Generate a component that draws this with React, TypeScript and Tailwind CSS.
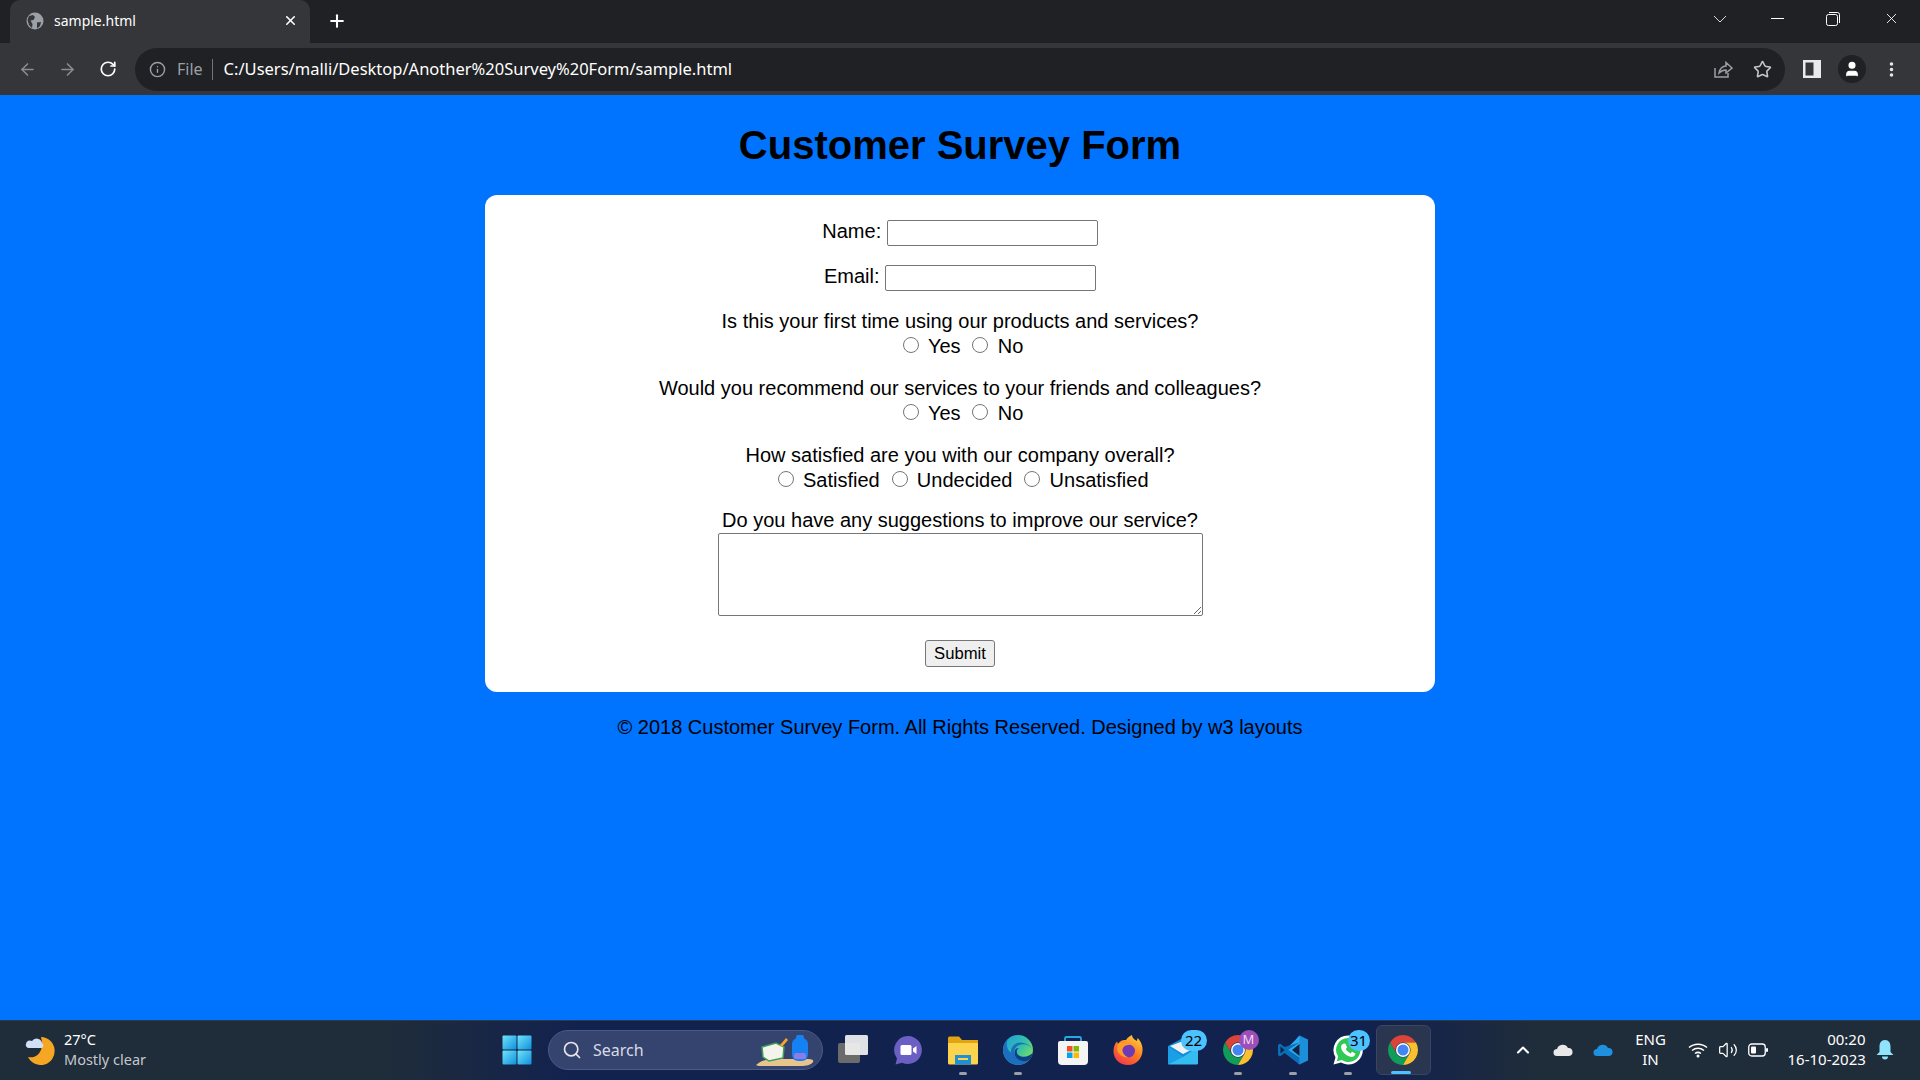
import React from 'react';
import { ArrowLeft, ArrowRight, ChevronUp, Info, MoreVertical, Plus, RotateCw, Search, Star, User, Volume2, X } from 'lucide-react';

const ChromeIcon = () => (
  <svg width="30" height="30" viewBox="0 0 24 24">
    <path d="M12 6H22.39A12 12 0 0 0 1.61 6L6.8 15A6 6 0 0 1 12 6Z" fill="#db4437" />
    <path d="M12 6H22.39A12 12 0 0 0 1.61 6L6.8 15A6 6 0 0 1 12 6Z" fill="#0f9d58" transform="rotate(-120 12 12)" />
    <path d="M12 6H22.39A12 12 0 0 0 1.61 6L6.8 15A6 6 0 0 1 12 6Z" fill="#fbc02d" transform="rotate(120 12 12)" />
    <circle cx="12" cy="12" r="5.6" fill="#fff" />
    <circle cx="12" cy="12" r="4.4" fill="#4285f4" />
  </svg>
);

const WindowsIcon = () => (
  <svg width="30" height="30" viewBox="0 0 30 30">
    <defs>
      <linearGradient id="win" x1="0" y1="0" x2="1" y2="1">
        <stop offset="0" stopColor="#6fe4fb" />
        <stop offset="1" stopColor="#0f8fdc" />
      </linearGradient>
    </defs>
    <rect x="0.5" y="0.5" width="14" height="14" rx="1" fill="url(#win)" />
    <rect x="15.5" y="0.5" width="14" height="14" rx="1" fill="url(#win)" />
    <rect x="0.5" y="15.5" width="14" height="14" rx="1" fill="url(#win)" />
    <rect x="15.5" y="15.5" width="14" height="14" rx="1" fill="url(#win)" />
  </svg>
);

const TaskViewIcon = () => (
  <svg width="30" height="30" viewBox="0 0 30 30">
    <rect x="0" y="8" width="22" height="20" rx="2" fill="#6b6b6b" />
    <rect x="7" y="0" width="23" height="20" rx="1.5" fill="#f2f2f2" fillOpacity="0.92" />
  </svg>
);

const MeetIcon = () => (
  <svg width="30" height="30" viewBox="0 0 30 30">
    <path d="M15 1A14 14 0 1 1 9 27.7L2.5 29.5 4 23.4A14 14 0 0 1 15 1Z" fill="#6b5fc4" />
    <rect x="7.5" y="10" width="11" height="10" rx="1.5" fill="#fff" />
    <path d="M20 13.5 23.5 11v8L20 16.5Z" fill="#fff" />
  </svg>
);

const ExplorerIcon = () => (
  <svg width="30" height="30" viewBox="0 0 30 30">
    <path d="M0 3A1.5 1.5 0 0 1 1.5 1.5H11L14 5H30V10H0Z" fill="#e3a412" />
    <path d="M0 8H30V28A1.5 1.5 0 0 1 28.5 29.5H1.5A1.5 1.5 0 0 1 0 28Z" fill="#fbd34d" />
    <rect x="7" y="20" width="16" height="9.5" fill="#1f8fd6" />
    <rect x="10" y="23" width="10" height="2" fill="#fbd34d" />
  </svg>
);

const EdgeIcon = () => (
  <svg width="30" height="30" viewBox="0 0 30 30">
    <defs>
      <linearGradient id="edge-top" x1="0" y1="0" x2="1" y2="0.7">
        <stop offset="0" stopColor="#1b9de2" />
        <stop offset="0.6" stopColor="#35c1a8" />
        <stop offset="1" stopColor="#7ee05c" />
      </linearGradient>
    </defs>
    <circle cx="15" cy="15" r="15" fill="url(#edge-top)" />
    <path d="M30 17C29 11 23 8.5 18 9.5 12.5 10.5 10 15.5 12 20.5 14 25 20 27 25.5 25.5 22.5 28.5 19 30 15 30 7 30 0 23.5 0 15 0 11 2 7 4.5 5 2.5 11 5 16 8 17.5 7.5 12 12 7.5 17 7.5 23.5 7.5 29 11 30 17Z" fill="#1c6fc0" />
    <path d="M16 13.5C13 14 13 18.5 16 20.5 20 23 27 21.5 30 17.5 29.5 21 27.5 24 25.5 25.5 20 27.5 13.5 25 12 20.5 10.5 15.5 13 12 16 13.5Z" fill="#0c3f86" />
  </svg>
);

const StoreIcon = () => (
  <svg width="30" height="30" viewBox="0 0 30 30">
    <path d="M7 7V3.5A1.5 1.5 0 0 1 8.5 2H21.5A1.5 1.5 0 0 1 23 3.5V7" fill="none" stroke="#27a9e6" strokeWidth="1.8" />
    <path d="M0 8A2 2 0 0 1 2 6H28A2 2 0 0 1 30 8V26A4 4 0 0 1 26 30H4A4 4 0 0 1 0 26Z" fill="#f4f4f4" />
    <rect x="9" y="11" width="5.5" height="5.5" fill="#f25022" />
    <rect x="15.5" y="11" width="5.5" height="5.5" fill="#7fba00" />
    <rect x="9" y="17.5" width="5.5" height="5.5" fill="#00a4ef" />
    <rect x="15.5" y="17.5" width="5.5" height="5.5" fill="#ffb900" />
  </svg>
);

const FirefoxIcon = () => (
  <svg width="30" height="30" viewBox="0 0 30 30">
    <defs>
      <linearGradient id="fox" x1="0.8" y1="0" x2="0.2" y2="1">
        <stop offset="0" stopColor="#ffd23c" />
        <stop offset="0.5" stopColor="#ff7a1f" />
        <stop offset="1" stopColor="#f0344e" />
      </linearGradient>
    </defs>
    <path d="M19 0C19 3 22 5 24 6L24.5 3C28 6.5 30 11 29.5 16 29 24 23 30 15 30 6.5 30 0.5 24 0.5 16 0.5 12 2 8.5 4 6.5L5 9C7 5.5 10 4.5 13 5 14 3 16.5 1 19 0Z" fill="url(#fox)" />
    <circle cx="15.5" cy="16" r="6.5" fill="#6e3ab8" />
    <path d="M6 8C10 7 15 8 17 10 13 9.5 10.5 11 9.5 14 9 17.5 11.5 21 15.5 22.5 10 23 4 19 4 13 4 11 5 9 6 8Z" fill="#ff9a2b" />
  </svg>
);

const MailIcon = () => (
  <svg width="30" height="30" viewBox="0 0 30 30">
    <path d="M0 11 15 3 30 11V29H0Z" fill="#0f8fdc" />
    <path d="M2 11 18 5 27 13 15 19Z" fill="#f2f2f2" />
    <path d="M0 12 15 22 30 12V28A1.5 1.5 0 0 1 28.5 29.5H1.5A1.5 1.5 0 0 1 0 28Z" fill="#35bdf2" />
    <path d="M0 12 15 22 0 29.5Z" fill="#1a9fe6" />
  </svg>
);

const VsCodeIcon = () => (
  <svg width="30" height="30" viewBox="0 0 30 30">
    <path d="M21.5 0.5 30 4.5V25.5L21.5 29.5 7.5 16Z" fill="#1c8fda" />
    <path d="M21.5 0.5V29.5L17.5 25.5V20L8.5 13.5 17.5 5Z" fill="#2aa9ee" />
    <path d="M21.5 7.5 10 15 21.5 22.5V29.5L6.5 18 2 21.5 0 20V10L2 8.5 6.5 12Z" fill="#0a6fb8" />
    <path d="M2.5 11.5 6.5 15 2.5 18.5Z" fill="#13223f" />
    <path d="M21.5 9 14 15 21.5 21Z" fill="#13223f" />
  </svg>
);

const WhatsappIcon = () => (
  <svg width="30" height="30" viewBox="0 0 30 30">
    <path d="M15 0.5A14.5 14.5 0 1 1 8 27.5L0.5 29.5 2.5 22.3A14.5 14.5 0 0 1 15 0.5Z" fill="#fff" />
    <path d="M15 3A12 12 0 1 1 8.8 25L3.8 26.3 5.1 21.6A12 12 0 0 1 15 3Z" fill="#30c956" />
    <path d="M11 8.5 12.5 8.7 14 12.2 12.8 14C13.8 16 15.5 17.5 17.5 18.4L19 16.8 22.3 18.4C22.3 20.5 20.7 22 18.5 22 13.5 21.5 8.3 16.5 8 12 8 10.5 9.5 8.8 11 8.5Z" fill="#fff" />
  </svg>
);

const TaskItem = ({ children, dot, active, badge }: { children: React.ReactNode; dot?: boolean; active?: boolean; badge?: React.ReactNode }) => (
  <div className={`relative flex h-[50px] w-[55px] items-center justify-center rounded-md ${active ? 'bg-[#2a3550] border border-[#3a4560]' : ''}`}>
    {children}
    {badge}
    {dot && <span className="absolute bottom-[0px] left-[23px] h-[3px] w-[8px] rounded-full bg-[#9a9fa8]" />}
    {active && <span className="absolute bottom-[0px] left-[14px] h-[3px] w-[20px] rounded-full bg-[#4cc2ff]" />}
  </div>
);

const RadioGroup = ({ name, options }: { name: string; options: string[] }) => (
  <div className="mt-[2px]">
    {options.map((option) => (
      <React.Fragment key={option}>
        <input type="radio" name={name} className="ml-[6.25px] mr-[3.75px] h-4 w-4" /> {option}{' '}
      </React.Fragment>
    ))}
  </div>
);

export default function App() {
  return (
    <div className="flex h-screen w-full flex-col overflow-hidden bg-[#0073ff] font-['Liberation_Sans',Arial,sans-serif]">
      {/* tab strip */}
      <div className="flex h-[43px] shrink-0 items-end bg-[#202124] font-['Noto_Sans',sans-serif] text-white">
        <div className="ml-[10px] flex h-[43px] w-[300px] items-center rounded-t-[10px] bg-[#35363a] pb-[2px] pl-[16px] pr-[12px]">
          <svg width="18" height="18" viewBox="0 0 18 18">
            <circle cx="9" cy="9" r="8.5" fill="#9aa0a6" />
            <path d="M3 4 7 3 9 5 7.5 8 4.5 8.5 6.5 12 6 16 3 13 1.5 8Z" fill="#35363a" />
            <path d="M11 10.5 15 10 14 14 11 16.5Z" fill="#35363a" />
          </svg>
          <span className="ml-[10px] flex-1 text-[14px]">sample.html</span>
          <X size={15} strokeWidth={2.5} />
        </div>
        <div className="flex h-[43px] w-[53px] items-center justify-center pb-[2px]">
          <Plus size={20} strokeWidth={2.5} />
        </div>
        <div className="ml-auto flex h-[43px] items-center pb-[6px]">
          <svg width="14" height="8" viewBox="0 0 14 8" className="mr-[44px]">
            <path d="M1 1 7 7 13 1" fill="none" stroke="#d8d8d8" strokeWidth="1" />
          </svg>
          <div className="mr-[42px] h-[1px] w-[13px] bg-white" />
          <svg width="14" height="14" viewBox="0 0 14 14" className="mr-[43px]">
            <rect x="0.5" y="2.5" width="11" height="11" rx="2" fill="none" stroke="#fff" />
            <path d="M3 0.5H11.5A2 2 0 0 1 13.5 2.5V11" fill="none" stroke="#fff" />
          </svg>
          <X size={17} strokeWidth={1.25} className="mr-[20px]" />
        </div>
      </div>

      {/* toolbar */}
      <div className="flex h-[52px] shrink-0 items-center bg-[#35363a] font-['Noto_Sans',sans-serif]">
        <div className="flex w-[135px] items-center pl-[18px] text-[#8b8d90]">
          <ArrowLeft size={19} />
          <ArrowRight size={19} className="ml-[21px]" />
          <RotateCw size={18} strokeWidth={2.25} className="ml-[22px] text-white" />
        </div>
        <div className="flex h-[43px] w-[1650px] items-center rounded-full bg-[#202124] pl-[14px] pr-[4px]">
          <Info size={17} className="text-[#9aa0a6]" />
          <span className="ml-[11px] text-[16px] text-[#9aa0a6]">File</span>
          <div className="ml-[9px] mr-[11px] h-[21px] w-px bg-[#70757a]" />
          <span className="text-[16.5px] text-white">C:/Users/malli/Desktop/Another%20Survey%20Form/sample.html</span>
          <svg width="20" height="20" viewBox="0 0 20 20" className="ml-auto mr-[20px]">
            <path d="M2 9V18H15V14" fill="none" stroke="#9aa0a6" strokeWidth="1.5" />
            <path d="M6 14C6.5 10 9.5 7 13 7V3.5L19 9 13 14V11C10.5 11 8 12 6 14Z" fill="none" stroke="#9aa0a6" strokeWidth="1.5" />
          </svg>
          <Star size={19} strokeWidth={2} className="mr-[9px] text-[#c4c7c9]" />
        </div>
        <div className="flex items-center">
          <svg width="18" height="18" viewBox="0 0 18 18" className="ml-[18px]">
            <rect x="0" y="0" width="18" height="18" fill="#e8eaed" />
            <rect x="2.5" y="2.5" width="8" height="13" fill="#35363a" />
          </svg>
          <div className="ml-[17px] flex h-[28px] w-[28px] items-center justify-center rounded-full bg-[#202124]">
            <User size={18} fill="#fff" strokeWidth={1.5} className="text-white" />
          </div>
          <MoreVertical size={19} strokeWidth={2.5} className="ml-[16px] text-[#e8eaed]" />
        </div>
      </div>

      {/* page */}
      <main className="flex flex-1 flex-col items-center text-center text-[20px] leading-[23px] text-black">
        <h1 className="mb-[27px] mt-[27px] text-[40px] font-bold leading-[46px]">Customer Survey Form</h1>
        <form className="w-[950px] rounded-[12px] bg-white p-[25px]">
          <div className="mb-[19px] flex items-start justify-center gap-[5.5px]">
            <label>Name:</label>
            <input type="text" className="h-[26px] w-[211px] rounded-[2px] border border-[#767676] bg-white" />
          </div>
          <div className="mb-[18.5px] flex items-start justify-center gap-[5.5px]">
            <label>Email:</label>
            <input type="text" className="h-[26px] w-[211px] rounded-[2px] border border-[#767676] bg-white" />
          </div>
          <div className="mb-[19px]">
            <p>Is this your first time using our products and services?</p>
            <RadioGroup name="first" options={['Yes', 'No']} />
          </div>
          <div className="mb-[19px]">
            <p>Would you recommend our services to your friends and colleagues?</p>
            <RadioGroup name="recommend" options={['Yes', 'No']} />
          </div>
          <div className="mb-[17px]">
            <p>How satisfied are you with our company overall?</p>
            <RadioGroup name="satisfied" options={['Satisfied', 'Undecided', 'Unsatisfied']} />
          </div>
          <p>Do you have any suggestions to improve our service?</p>
          <textarea className="mx-auto mt-[1px] block h-[83px] w-[485px] rounded-[2px] border border-[#767676] bg-white" />
          <button type="button" className="mt-[24px] block mx-auto h-[27px] w-[70px] rounded-[3px] border border-[#767676] bg-[#efefef] text-[16.67px] leading-[19px]">
            Submit
          </button>
        </form>
        <p className="mt-[24px]">© 2018 Customer Survey Form. All Rights Reserved. Designed by w3 layouts</p>
      </main>

      {/* taskbar */}
      <div className="flex h-[60px] shrink-0 items-center border-t border-[#2c3a4a] bg-[linear-gradient(90deg,#1f2c3a_0%,#1f2c3a_20%,#12224f_30%,#12224f_72%,#1f2c3a_80%,#1f2c3a_100%)] pb-[1px] font-['Noto_Sans',sans-serif] text-white">
        <div className="flex w-[489px] shrink-0 items-center pl-[25px]">
          <svg width="30" height="30" viewBox="0 0 30 30">
            <path d="M16 2A14 14 0 1 1 3 22C11 24 20 17 16 2Z" fill="#f5a623" />
            <path d="M1 9A4 4 0 0 1 7 6 5.5 5.5 0 0 1 17 8 3 3 0 0 1 17 13H4A3 3 0 0 1 1 9Z" fill="#cfe0f7" />
          </svg>
          <div className="ml-[9px] pb-[2px] text-[14.5px] leading-[20px]">
            <div>27°C</div>
            <div className="text-[#c4c8cc]">Mostly clear</div>
          </div>
        </div>
        <TaskItem><WindowsIcon /></TaskItem>
        <div className="ml-[4px] flex h-[40px] w-[275px] shrink-0 items-center rounded-full border border-[#4a5a85] bg-[#35436f] pl-[13px]">
          <Search size={20} strokeWidth={2} className="text-[#e6e6e6]" />
          <span className="ml-[11px] text-[16px] text-[#d8dbe4]">Search</span>
          <svg width="58" height="32" viewBox="0 0 58 32" className="ml-auto mr-[8px]">
            <path d="M0 31C4 27 10 25 20 25H52C56 25 58 26 57 28 55 31 50 32 45 32H8C4 32 1 32 0 31Z" fill="#e8c48d" />
            <path d="M6 13 20 9 28 13 27 24 13 27 7 23Z" fill="#f4f4ec" stroke="#3f9e5a" strokeWidth="1.5" />
            <path d="M24 11 30 4 32 6 26 13Z" fill="#f5a623" />
            <rect x="36" y="4" width="16" height="23" rx="6" fill="#1681f2" />
            <rect x="40" y="1" width="8" height="5" rx="2" fill="#1681f2" />
            <rect x="38" y="19" width="12" height="6" rx="2" fill="#8f7be8" />
          </svg>
        </div>
        <div className="ml-[2.5px] flex items-center">
          <TaskItem><TaskViewIcon /></TaskItem>
          <TaskItem><MeetIcon /></TaskItem>
          <TaskItem dot><ExplorerIcon /></TaskItem>
          <TaskItem dot><EdgeIcon /></TaskItem>
          <TaskItem><StoreIcon /></TaskItem>
          <TaskItem><FirefoxIcon /></TaskItem>
          <TaskItem badge={<span className="absolute left-[25px] top-[5px] flex h-[21px] w-[26px] items-center justify-center rounded-full bg-[#4cc2ff] text-[15px] text-black">22</span>}><MailIcon /></TaskItem>
          <TaskItem dot badge={<span className="absolute left-[28px] top-[5px] flex h-[20px] w-[20px] items-center justify-center rounded-full bg-[#9c4fb8] text-[13px] text-[#f0d8f5]">M</span>}><ChromeIcon /></TaskItem>
          <TaskItem dot><VsCodeIcon /></TaskItem>
          <TaskItem dot badge={<span className="absolute left-[27px] top-[5px] flex h-[21px] w-[22px] items-center justify-center rounded-full bg-[#4cc2ff] text-[15px] text-black">31</span>}><WhatsappIcon /></TaskItem>
          <TaskItem active><ChromeIcon /></TaskItem>
        </div>
        <div className="ml-[82px] flex items-center">
          <ChevronUp size={20} strokeWidth={2.5} />
          <svg width="20" height="14" viewBox="0 0 20 14" className="ml-[20px]">
            <path d="M4 13A3.5 3.5 0 0 1 4 6 6 6 0 0 1 15 5 4 4 0 0 1 16 13Z" fill="#e8e8e8" />
          </svg>
          <svg width="20" height="14" viewBox="0 0 20 14" className="ml-[20px]">
            <path d="M4 13A3.5 3.5 0 0 1 4 6 6 6 0 0 1 15 5 4 4 0 0 1 16 13Z" fill="#1f8fe0" />
          </svg>
          <div className="ml-[8px] w-[60px] pb-[2px] text-center text-[15px] leading-[20px]">
            <div>ENG</div>
            <div>IN</div>
          </div>
          <svg width="20" height="16" viewBox="0 0 20 16" className="ml-[7px]">
            <path d="M1 5.5C6 1 14 1 19 5.5M4 8.5C7.5 5.5 12.5 5.5 16 8.5M7 11.5C9 10 11 10 13 11.5" fill="none" stroke="#fff" strokeWidth="1.5" />
            <circle cx="10" cy="14" r="1.5" fill="#fff" />
          </svg>
          <Volume2 size={20} strokeWidth={1.5} className="ml-[10px]" />
          <svg width="20" height="14" viewBox="0 0 20 14" className="ml-[10px]">
            <rect x="0.75" y="1" width="16.5" height="12" rx="3" fill="none" stroke="#fff" strokeWidth="1.3" />
            <rect x="3" y="3.5" width="5" height="7" rx="1" fill="#fff" />
            <rect x="18" y="5" width="2" height="4" rx="1" fill="#fff" />
          </svg>
          <div className="ml-[20px] w-[78px] whitespace-nowrap pb-[2px] text-right text-[15px] leading-[20px]">
            <div>00:20</div>
            <div>16-10-2023</div>
          </div>
          <svg width="18" height="20" viewBox="0 0 18 20" className="ml-[10px]">
            <path d="M9 0C13 0 14.5 3 14.5 7V12L17.5 15H0.5L3.5 12V7C3.5 3 5 0 9 0Z" fill="#8fe4fb" />
            <path d="M6 16.5H12A3 3 0 0 1 6 16.5Z" fill="#8fe4fb" />
          </svg>
        </div>
      </div>
    </div>
  );
}
